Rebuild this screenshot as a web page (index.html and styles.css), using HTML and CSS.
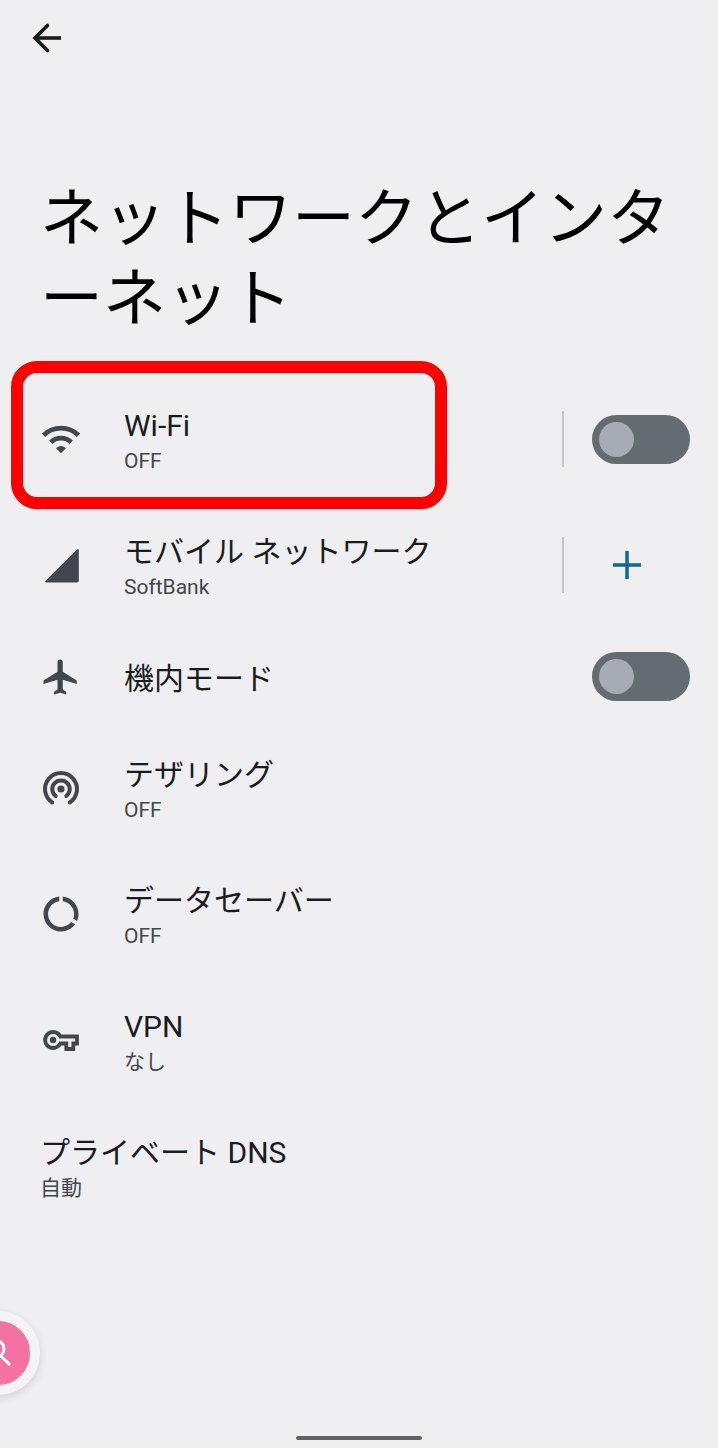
FILE: index.html
```
<!DOCTYPE html>
<html lang="ja">
<head>
    <meta charset="UTF-8">
    <title>ネットワークとインターネット</title>
    <meta name="viewport" content="width=device-width, initial-scale=1.0">
    <link rel="stylesheet" href="styles.css">
</head>
<body>
<header>
    <button type="button" class="back" aria-label="戻る">
        <svg class="icon" viewBox="0 0 42 42" fill="none" stroke="currentColor" stroke-width="3.6">
            <path d="M35 21H10"/>
            <path d="M21.500 8.500L9 21l12.500 12.500" stroke-linecap="round"/>
        </svg>
    </button>
</header>

<main>
    <h1>ネットワークとインターネット</h1>

    <ul class="settings">
        <li class="row highlight">
            <svg class="icon" viewBox="0 0 42 42" fill="none" stroke="currentColor" stroke-width="4.800">
                <path d="M3.500 17.300A25 25 0 0 1 38.500 17.300"/>
                <path d="M10.700 24.300A15 15 0 0 1 31.300 24.300"/>
                <path d="M16 30.200Q21 26 26 30.200L21 35.200z" fill="currentColor" stroke="none"/>
            </svg>
            <label class="text" for="wifi">
                <span class="name">Wi-Fi</span>
                <span class="summary">OFF</span>
            </label>
            <div class="action divided"><input type="checkbox" class="switch" id="wifi"></div>
        </li>
        <li class="row">
            <svg class="icon" viewBox="0 0 42 42" fill="currentColor">
                <path d="M37 5.400Q38.800 4 38.800 6.500V36.500Q38.800 38.500 37 38.500H6.500Q4.500 38.500 5.800 36.600z"/>
            </svg>
            <div class="text">
                <span class="name">モバイル ネットワーク</span>
                <span class="summary">SoftBank</span>
            </div>
            <div class="action divided">
                <button type="button" class="add" aria-label="追加">
                    <svg class="icon" viewBox="0 0 42 42" fill="none" stroke="currentColor" stroke-width="3.500">
                        <path d="M7 21h28M21 7v28"/>
                    </svg>
                </button>
            </div>
        </li>
        <li class="row single">
            <svg class="icon" viewBox="0 0 24 24" fill="currentColor">
                <path d="M21 16v-2l-8-5V3.500c0-.83-.67-1.500-1.500-1.500S10 2.670 10 3.500V9l-8 5v2l8-2.500V19l-2 1.500V22l3.500-1 3.500 1v-1.500L13 19v-5.500l8 2.500z"/>
            </svg>
            <label class="text" for="airplane">
                <span class="name">機内モード</span>
            </label>
            <div class="action"><input type="checkbox" class="switch" id="airplane"></div>
        </li>
        <li class="row">
            <svg class="icon" viewBox="0 0 42 42" fill="none" stroke="currentColor" stroke-width="4">
                <path d="M12.300 35.500A16 16 0 1 1 29.700 35.500" stroke-linecap="round"/>
                <path d="M15.700 29A8.700 8.700 0 1 1 26.300 29" stroke-linecap="round"/>
                <circle cx="21" cy="22" r="3.600" fill="currentColor" stroke="none"/>
            </svg>
            <div class="text">
                <span class="name">テザリング</span>
                <span class="summary">OFF</span>
            </div>
        </li>
        <li class="row">
            <svg class="icon" viewBox="0 0 24 24" fill="currentColor">
                <path d="M13 2.050v2.600c3.700.5 6.500 3.600 6.500 7.350 0 .95-.18 1.860-.5 2.700l2.250 1.320c.48-1.240.75-2.600.75-4.020 0-5.180-3.950-9.450-9-9.950zM12 19.400c-4.100 0-7.400-3.300-7.400-7.400 0-3.750 2.700-6.850 6.400-7.350V2.050c-5.060.5-9 4.760-9 9.950 0 5.520 4.470 10 9.990 10 3.310 0 6.240-1.610 8.060-4.090l-2.250-1.320C16.450 18.300 14.350 19.400 12 19.400z"/>
            </svg>
            <div class="text">
                <span class="name">データセーバー</span>
                <span class="summary">OFF</span>
            </div>
        </li>
        <li class="row">
            <svg class="icon" viewBox="0 0 42 42" fill="none" stroke="currentColor" stroke-width="3.800">
                <path d="M20.300 17.500H37V24.500H33.300V30H26.300V24.500H20.300A8 8 0 1 1 20.300 17.500z"/>
                <circle cx="13" cy="21" r="3.200" fill="currentColor" stroke="none"/>
            </svg>
            <div class="text">
                <span class="name">VPN</span>
                <span class="summary">なし</span>
            </div>
        </li>
        <li class="row">
            <div class="text">
                <span class="name">プライベート DNS</span>
                <span class="summary">自動</span>
            </div>
        </li>
    </ul>
</main>

<button type="button" class="search" aria-label="検索">
    <svg class="icon" viewBox="0 0 42 42" fill="none" stroke="currentColor" stroke-width="3">
        <circle cx="18" cy="17" r="9"/>
        <path d="M24 24l9 9"/>
    </svg>
</button>

<div class="home-bar"></div>
</body>
</html>
```
FILE: styles.css
```
*,
*::before,
*::after {
    box-sizing: border-box;
}

body {
    display: flex;
    flex-direction: column;
    min-height: 100vh;
    margin: 0;
    background-color: #efeff2;
    color: #191c1e;
    font-family: Roboto, "Noto Sans CJK JP", sans-serif;
}

button {
    display: flex;
    align-items: center;
    justify-content: center;
    padding: 0;
    border: none;
    background: none;
    color: inherit;
    cursor: pointer;
}

header {
    padding: 17px 26px;
}

main {
    padding: 103px 28px 0 40px;
}

h1 {
    margin: 0 0 37px;
    color: #000;
    font-size: 63px;
    font-weight: 400;
    line-height: 80px;
    line-break: anywhere;
}

.icon {
    display: block;
    flex: none;
    width: 42px;
    height: 42px;
}

.settings {
    margin: 0;
    padding: 0;
    list-style: none;
}

.row {
    position: relative;
    display: flex;
    align-items: center;
    gap: 42px;
    height: 126px;
    color: #42474d;
}

.single {
    height: 97px;
}

/* red frame around the row to tap */
.highlight::after {
    content: "";
    position: absolute;
    top: -15px;
    bottom: -7px;
    left: -29px;
    width: 436px;
    border: 12px solid #f00;
    border-radius: 26px;
    pointer-events: none;
}

.text {
    flex: 1;
    padding-top: 4px;
}

.name,
.summary {
    display: block;
}

.name {
    color: #191c1e;
    font-size: 30px;
    line-height: 40px;
}

.summary {
    font-size: 21px;
    line-height: 30px;
}

.action {
    display: flex;
    align-items: center;
    width: 98px;
    height: 56px;
}

.divided {
    width: 128px;
    padding-left: 28px;
    border-left: 2px solid #c6c6c9;
}

.switch {
    display: flex;
    align-items: center;
    width: 98px;
    height: 49px;
    margin: 0;
    padding: 7px;
    border-radius: 25px;
    background-color: #656c71;
    appearance: none;
    cursor: pointer;
}

.switch::before {
    content: "";
    width: 35px;
    height: 35px;
    border-radius: 50%;
    background-color: #a6abb4;
}

.switch:checked {
    justify-content: flex-end;
}

.add {
    width: 70px;
    height: 56px;
    color: #0f6891;
}

/* half hidden at the screen edge */
.search {
    position: fixed;
    bottom: 53px;
    left: -44px;
    width: 84px;
    height: 84px;
    border: 10px solid #f4f4f4;
    border-radius: 50%;
    background-color: #f472a2;
    box-shadow: 0 3px 8px rgba(0, 0, 0, 0.12);
    color: #fff;
}

.home-bar {
    width: 126px;
    height: 4px;
    margin: auto auto 8px;
    border-radius: 2px;
    background-color: #626264;
}
```
